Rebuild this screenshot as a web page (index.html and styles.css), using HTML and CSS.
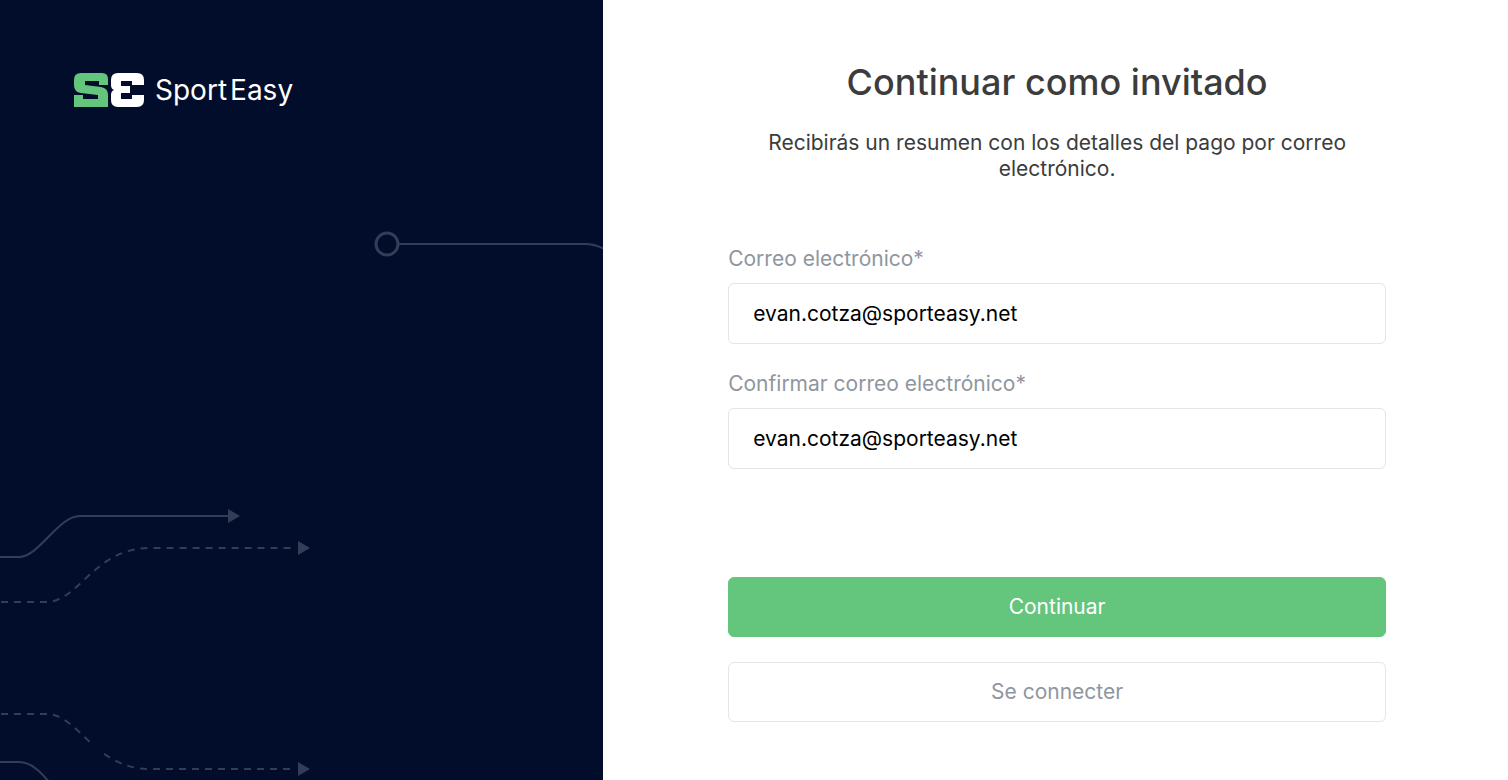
FILE: index.html
```html
<!DOCTYPE html>
<html lang="es">
<head>
    <meta charset="UTF-8">
    <meta name="viewport" content="width=device-width, initial-scale=1.0">
    <title>SportEasy</title>
    <link rel="stylesheet" href="styles.css">
</head>
<body>
    <aside class="side">
        <a class="logo" href="#" aria-label="SportEasy">
            <svg class="logo-mark" viewBox="0 0 70 34" aria-hidden="true">
                <path fill="#64c67d" d="M7 0H28Q34 0 34 6V12H25V8H11V12L27 14Q34 15 34 22V34H0V22H9V26H24V22L7 20Q0 19 0 12V7Q0 0 7 0Z"/>
                <path fill="#fff" d="M44 0H63Q70 0 70 7V12H58V8H47V13H56V20H47V26H58V22H70V27Q70 34 63 34H44Q37 34 37 27V22Q37 18 40 17Q37 16 37 12V7Q37 0 44 0Z"/>
            </svg>
            <span class="logo-text"><span>Sport</span><span>Easy</span></span>
        </a>
        <svg class="track-top" viewBox="0 0 230 27" aria-hidden="true">
            <circle cx="13" cy="13" r="11"/>
            <path d="M25 13H211Q221 13 230 18"/>
        </svg>
        <svg class="track-bottom" viewBox="0 0 320 280" aria-hidden="true">
            <path d="M0 57H19C39 57 58 16 80 16H229"/>
            <path class="dashed" d="M1 102H46C79 102 94 48 150 48H293"/>
            <path class="dashed-split" d="M1 214H46C79 214 94 269 150 269H293"/>
            <path d="M0 262H19C32 262 42 273 55 289"/>
            <path class="arrow" d="M228 9L240 16L228 23ZM298 41L310 48L298 55ZM298 262L310 269L298 276Z"/>
        </svg>
    </aside>
    <main class="content">
        <h1>Continuar como invitado</h1>
        <p class="intro">Recibirás un resumen con los detalles del pago por correo electrónico.</p>
        <form class="guest-form">
            <div class="field">
                <label for="email">Correo electrónico*</label>
                <input type="email" id="email" value="evan.cotza@sporteasy.net" required>
            </div>
            <div class="field">
                <label for="email-confirm">Confirmar correo electrónico*</label>
                <input type="email" id="email-confirm" value="evan.cotza@sporteasy.net" required>
            </div>
            <div class="actions">
                <button type="submit" class="btn btn-primary">Continuar</button>
                <button type="button" class="btn btn-secondary">Se connecter</button>
            </div>
        </form>
    </main>
</body>
</html>
```
FILE: styles.css
```css
* {
    box-sizing: border-box;
}

body {
    margin: 0;
    min-height: 100vh;
    display: flex;
    font-family: Inter, "Liberation Sans", sans-serif;
    font-size: 21px;
    line-height: 26px;
    color: #3c3c3c;
    background-color: #fff;
}

.side {
    position: relative;
    width: 40%;
    padding: 72px 74px;
    background-color: #020d2b;
    overflow: hidden;
}

.logo {
    display: inline-flex;
    align-items: center;
    gap: 11px;
    color: #fff;
    text-decoration: none;
}

.logo-mark {
    width: 70px;
    height: 34px;
}

.logo-text {
    display: flex;
    gap: 3px;
    font-size: 28px;
    line-height: 36px;
}

/* decorative lines behind the logo */
.track-top,
.track-bottom {
    position: absolute;
    fill: none;
    stroke: #333d57;
    stroke-width: 2;
}

.track-top {
    top: 231px;
    left: 62%;
    width: 230px;
    height: 27px;
}

.track-top circle {
    stroke-width: 3;
}

.track-bottom {
    left: 0;
    bottom: 0;
    width: 320px;
    height: 280px;
}

.dashed {
    stroke-dasharray: 7 6;
}

/* same dashes, with one left out halfway down the slope */
.dashed-split {
    stroke-dasharray: 7 6 7 6 7 6 7 6 7 6 7 6 7 6 7 19 7 6 7 6 7 6 7 6 7 6 7 6 7 6 7 6 7 6 7 6 7 6 7 6 7 6 7 6 7 6 7 6;
}

.arrow {
    fill: #333d57;
    stroke: none;
}

.content {
    flex: 1;
    padding: 58px 122px 58px 125px;
}

h1 {
    margin: 0 0 24px;
    font-size: 36px;
    font-weight: 500;
    line-height: 48px;
    text-align: center;
}

.intro {
    margin: 0 0 64px;
    text-align: center;
}

.guest-form {
    display: flex;
    flex-direction: column;
    gap: 27px;
}

.field {
    display: flex;
    flex-direction: column;
    gap: 11px;
}

.field label {
    color: #8f96a0;
}

.field input {
    width: 100%;
    height: 61px;
    padding: 0 24px;
    border: 1px solid #e3e5eb;
    border-radius: 6px;
    font: inherit;
    color: #000;
    background-color: #fff;
}

.actions {
    display: flex;
    flex-direction: column;
    gap: 25px;
    margin-top: 81px;
}

.btn {
    height: 60px;
    border: 1px solid #e3e5eb;
    border-radius: 6px;
    font: inherit;
    cursor: pointer;
}

.btn-primary {
    border-color: #64c67d;
    color: #fff;
    background-color: #64c67d;
}

.btn-secondary {
    color: #8f96a0;
    background-color: #fff;
}
```
